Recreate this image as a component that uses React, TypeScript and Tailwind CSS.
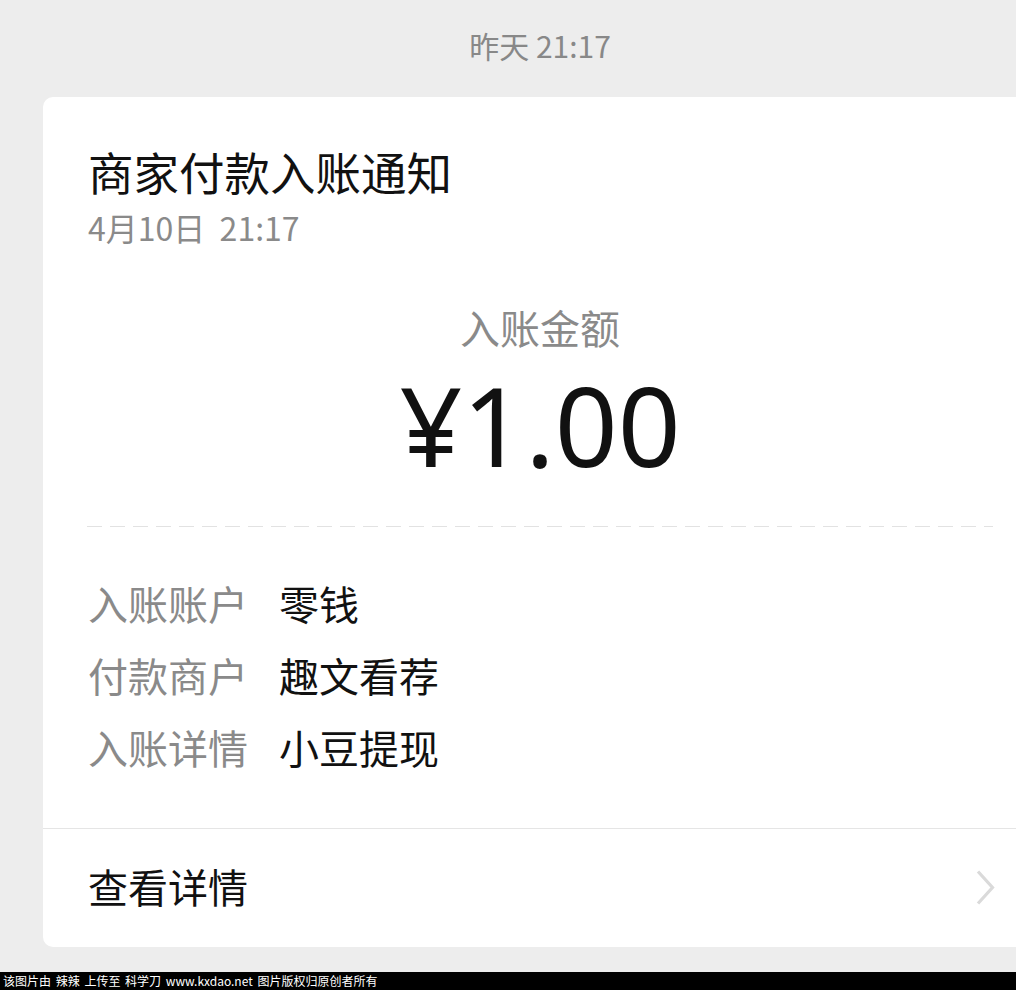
import React from "react";

const cjk = '"Noto Sans CJK SC", "Noto Sans", sans-serif';

export default function App() {
  const rows: [string, string][] = [
    ["入账账户", "零钱"],
    ["付款商户", "趣文看荐"],
    ["入账详情", "小豆提现"],
  ];
  return (
    <div
      className="w-[1016px] h-[990px] bg-[#ededed] overflow-hidden flex flex-col"
      style={{ fontFamily: cjk }}
    >
      <div className="w-[1080px] shrink-0 flex flex-col px-[43px]">
        <div className="h-[97px] flex items-center justify-center pb-[8px]">
          <span className="text-[30px] leading-none text-[#888888]">昨天 21:17</span>
        </div>
        <div className="bg-white rounded-[10px] flex flex-col">
          <div className="px-[45px] pt-[52px] flex flex-col">
            <div className="text-[45.5px] leading-none text-[#111111]">商家付款入账通知</div>
            <div className="mt-[16px] text-[32px] leading-none text-[#8a8a8a]">4月10日&nbsp;&nbsp;21:17</div>
          </div>
          <div className="mt-[64px] text-center text-[40px] leading-none text-[#8a8a8a]">入账金额</div>
          <div
            className="mt-[22px] text-center text-[110px] leading-none text-[#111111] h-[110px] flex items-center justify-center"
            style={{ fontFamily: '"Noto Sans", sans-serif' }}
          >
            ¥1.00
          </div>
          <div className="mx-[44px] mt-[47px] h-px bg-[linear-gradient(to_right,#e2e2e2_15px,transparent_15px)] bg-[length:23px_1px] bg-repeat-x" />
          <div className="mt-[40px] px-[45px] flex flex-col">
            {rows.map(([k, v]) => (
              <div key={k} className="h-[72px] flex items-center text-[40px] leading-none">
                <span className="w-[191px] text-[#8a8a8a]">{k}</span>
                <span className="text-[#111111]">{v}</span>
              </div>
            ))}
          </div>
          <div className="mt-[45px] h-px bg-[#e5e5e5]" />
          <div className="h-[118px] flex items-center justify-between pl-[45px] pr-[42px]">
            <span className="text-[40px] leading-none text-[#111111] -mt-[3px]">查看详情</span>
            <svg width="19" height="35" viewBox="0 0 19 35" fill="none">
              <path d="M2 1.5 L16.5 17.5 L2 33.5" stroke="#dadada" strokeWidth="3.2" />
            </svg>
          </div>
        </div>
      </div>
      <div className="mt-[25px] h-[18px] w-[1016px] bg-black flex items-center pl-[3px]">
        <span className="text-[12px] leading-none text-white whitespace-pre [word-spacing:2px]">
          该图片由 辣辣 上传至 科学刀 www.kxdao.net 图片版权归原创者所有
        </span>
      </div>
    </div>
  );
}
